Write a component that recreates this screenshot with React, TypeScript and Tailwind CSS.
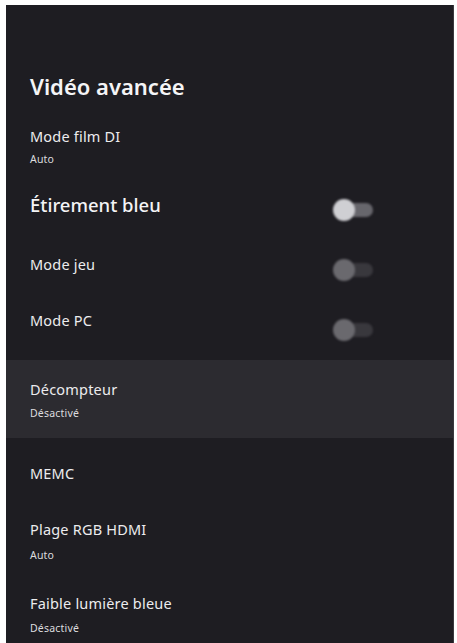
import React from "react";

const font = { fontFamily: '"Noto Sans", "Open Sans", sans-serif' };

function Toggle({ on }: { on: boolean }) {
  return (
    <div className="relative w-[40px] h-[22px] shrink-0 blur-[0.8px]">
      <div
        className={
          "absolute right-0 top-[4px] w-[30px] h-[14px] rounded-full " +
          (on ? "bg-[#67666c]" : "bg-[#39383d]")
        }
      />
      <div
        className={
          "absolute left-0 top-0 w-[22px] h-[22px] rounded-full " +
          (on ? "bg-[#cfcfd3]" : "bg-[#6a696e]")
        }
      />
    </div>
  );
}

const label = "text-[14.5px] leading-[16px] tracking-[0.2px]";
const sub = "text-[10.5px] leading-[12px] tracking-[0.2px] text-[#dcdcdf]";

export default function App() {
  return (
    <div className="w-[457px] h-[643px] bg-white pl-[6px] pt-[5px] pr-[3px] overflow-hidden" style={font}>
      <div className="h-full bg-[#1e1d22] text-[#ececee] border-r border-[#3a393e]">
        {/* Header */}
        <div className="h-[110px] pt-[69px] px-[24px]">
          <div className="text-[22px] leading-[24px] font-semibold text-[#f4f4f6]">Vidéo avancée</div>
        </div>

        {/* Mode film DI */}
        <div className="h-[50px] pt-[13px] px-[24px]">
          <div className={label}>Mode film DI</div>
          <div className={"mt-[9px] " + sub}>Auto</div>
        </div>

        {/* Étirement bleu */}
        <div className="h-[50px] pt-[30px] pl-[24px] pr-[80px] flex items-start justify-between">
          <div className="text-[18.5px] leading-[20px] font-medium text-[#f4f4f6]">Étirement bleu</div>
          <div className="mt-[4px]">
            <Toggle on />
          </div>
        </div>

        {/* Mode jeu */}
        <div className="h-[57px] pt-[41px] pl-[24px] pr-[80px] flex items-start justify-between">
          <div className={label}>Mode jeu</div>
          <div className="mt-[3px]">
            <Toggle on={false} />
          </div>
        </div>

        {/* Mode PC */}
        <div className="h-[56px] pt-[40px] pl-[24px] pr-[80px] flex items-start justify-between">
          <div className={label}>Mode PC</div>
          <div className="mt-[7px]">
            <Toggle on={false} />
          </div>
        </div>

        {/* Décompteur (highlighted) */}
        <div className="mt-[32px] h-[78px] bg-[#2c2b30] pt-[21px] px-[24px]">
          <div className={label}>Décompteur</div>
          <div className={"mt-[10px] " + sub}>Désactivé</div>
        </div>

        {/* MEMC */}
        <div className="h-[43px] pt-[27px] px-[24px]">
          <div className={label}>MEMC</div>
        </div>

        {/* Plage RGB HDMI */}
        <div className="h-[80px] pt-[40px] px-[24px]">
          <div className={label}>Plage RGB HDMI</div>
          <div className={"mt-[12px] " + sub}>Auto</div>
        </div>

        {/* Faible lumière bleue */}
        <div className="pt-[34px] px-[24px]">
          <div className={label}>Faible lumière bleue</div>
          <div className={"mt-[11px] " + sub}>Désactivé</div>
        </div>
      </div>
    </div>
  );
}
